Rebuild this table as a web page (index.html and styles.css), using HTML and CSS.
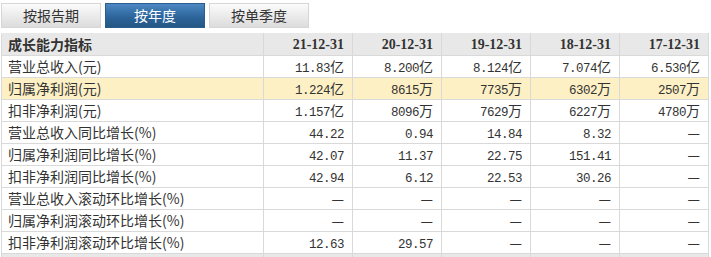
FILE: index.html
```html
<!DOCTYPE html>
<html lang="zh-CN">
<head>
<meta charset="utf-8">
<link rel="stylesheet" href="styles.css">
</head>
<body>
<div class="tabs">
  <div class="tab">按报告期</div>
  <div class="tab active">按年度</div>
  <div class="tab">按单季度</div>
</div>
<table class="grid">
  <thead>
    <tr><th class="label">成长能力指标</th><th>21-12-31</th><th>20-12-31</th><th>19-12-31</th><th>18-12-31</th><th>17-12-31</th></tr>
  </thead>
  <tbody>
    <tr><td class="label">营业总收入(元)</td><td><span class="n">11.83</span>亿</td><td><span class="n">8.200</span>亿</td><td><span class="n">8.124</span>亿</td><td><span class="n">7.074</span>亿</td><td><span class="n">6.530</span>亿</td></tr>
    <tr class="hl"><td class="label">归属净利润(元)</td><td><span class="n">1.224</span>亿</td><td><span class="n">8615</span>万</td><td><span class="n">7735</span>万</td><td><span class="n">6302</span>万</td><td><span class="n">2507</span>万</td></tr>
    <tr><td class="label">扣非净利润(元)</td><td><span class="n">1.157</span>亿</td><td><span class="n">8096</span>万</td><td><span class="n">7629</span>万</td><td><span class="n">6227</span>万</td><td><span class="n">4780</span>万</td></tr>
    <tr><td class="label">营业总收入同比增长(%)</td><td><span class="n">44.22</span></td><td><span class="n">0.94</span></td><td><span class="n">14.84</span></td><td><span class="n">8.32</span></td><td>—</td></tr>
    <tr><td class="label">归属净利润同比增长(%)</td><td><span class="n">42.07</span></td><td><span class="n">11.37</span></td><td><span class="n">22.75</span></td><td><span class="n">151.41</span></td><td>—</td></tr>
    <tr><td class="label">扣非净利润同比增长(%)</td><td><span class="n">42.94</span></td><td><span class="n">6.12</span></td><td><span class="n">22.53</span></td><td><span class="n">30.26</span></td><td>—</td></tr>
    <tr><td class="label">营业总收入滚动环比增长(%)</td><td>—</td><td>—</td><td>—</td><td>—</td><td>—</td></tr>
    <tr><td class="label">归属净利润滚动环比增长(%)</td><td>—</td><td>—</td><td>—</td><td>—</td><td>—</td></tr>
    <tr><td class="label">扣非净利润滚动环比增长(%)</td><td><span class="n">12.63</span></td><td><span class="n">29.57</span></td><td>—</td><td>—</td><td>—</td></tr>
    <tr class="foot"><td class="label"></td><td></td><td></td><td></td><td></td><td></td></tr>
  </tbody>
</table>
</body>
</html>
```
FILE: styles.css
```css
html, body {
  margin: 0;
  padding: 0;
  background: #fff;
  overflow: hidden;
}
body {
  font-family: "Noto Sans CJK SC", "Liberation Sans", sans-serif;
  font-size: 14px;
  color: #333;
}
.tabs {
  display: flex;
  gap: 4px;
  padding: 3px 0 0 1px;
  height: 25px;
}
.tab {
  width: 98px;
  height: 23px;
  line-height: 23px;
  text-align: center;
  border: 1px solid #d6d6d6;
  background: linear-gradient(#fbfbfb, #dcdcdc);
  color: #333;
  font-size: 14px;
  overflow: hidden;
}
.tab.active {
  border-color: #2a5d8d;
  background: linear-gradient(#4c88c2, #2b6399 60%, #245784);
  color: #fff;
}
.grid {
  margin: 5px 0 0 1px;
  border-collapse: collapse;
  table-layout: fixed;
  width: 707px;
}
.grid th, .grid td {
  border: 1px solid #d9d9d9;
  height: 21px;
  padding: 0 8px 0 6px;
  text-align: right;
  white-space: nowrap;
  line-height: 21px;
  overflow: hidden;
  box-sizing: border-box;
}
.grid tr {
  height: 22px;
}
.grid th {
  background: #e8e8e8;
  font-family: "Liberation Serif", "Noto Sans CJK SC", serif;
  font-weight: bold;
  font-size: 14px;
  color: #333;
  border-top-color: #e8e8e8;
}
.grid th.label {
  font-family: "Noto Sans CJK SC", sans-serif;
}
.grid .label {
  text-align: left;
  width: 262px;
}
.grid th:not(.label), .grid td:not(.label) {
  width: 89px;
}
.n {
  font-family: "Liberation Mono", monospace;
  font-size: 12.5px;
  letter-spacing: -0.5px;
  line-height: 1;
}
.hl td {
  background: #fdf0c5;
}
.foot td {
  background: #e8e8e8;
}
```
